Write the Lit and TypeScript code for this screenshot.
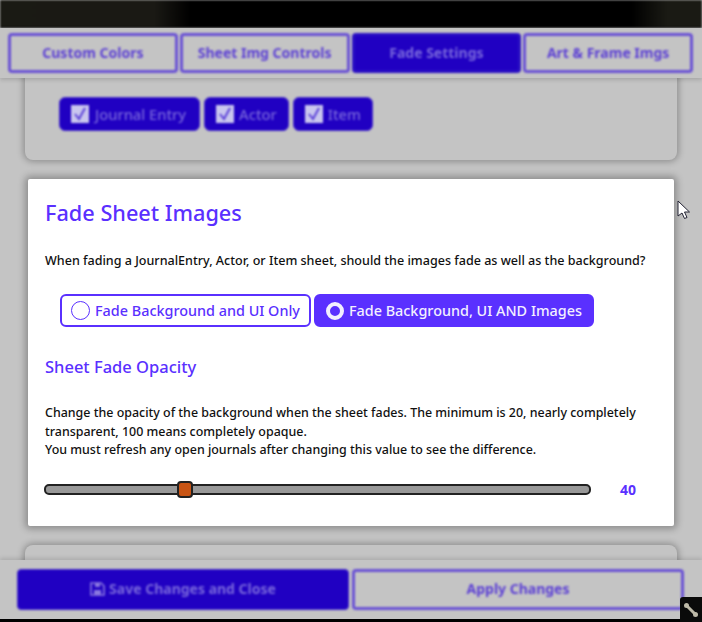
import { LitElement, html, css, svg } from "lit";
import { customElement } from "lit/decorators.js";

const check = svg`<svg class="ck" viewBox="0 0 18 18" width="18" height="18"><rect x="0" y="0" width="18" height="18" fill="#c9c6ee"/><path d="M4 9l4 5 6-11" fill="none" stroke="#5a40d8" stroke-width="2"/></svg>`;

@customElement("app-root")
export class AppRoot extends LitElement {
  static styles = css`
    :host { display: block; width: 702px; height: 622px; overflow: hidden; position: relative; background: #c4c4c4; font-family: "Noto Sans", sans-serif; }
    * { box-sizing: border-box; }
    .shell { display: flex; flex-direction: column; height: 622px; }
    .top { height: 28px; flex: none; background: linear-gradient(90deg, #1a1a14 0, #1a1914 22%, #000 27%, #000 90%, #1a1a14 95%); border-bottom: 1px solid #000; filter: blur(1px); }
    .tabs { flex: none; height: 50px; display: flex; padding: 5px 9px 0 8px; gap: 2px; background: #c4c4c4; box-shadow: 0 2px 4px rgba(0,0,0,.15); z-index: 2; position: relative; }
    .tab { width: 170px; height: 40px; border: 3px solid #6a52d4; border-radius: 4px; color: #5c40d4; display: flex; align-items: center; justify-content: center; padding-bottom: 2px; font-weight: 700; font-size: 14px; filter: blur(.9px); }
    .tab.on { background: #2000c2; border-color: #2a10c4; color: #7a68dc; }
    .main { flex: 1; min-height: 0; overflow: hidden; padding: 0 25px; }
    .card { border-radius: 8px; background: #c4c4c4; box-shadow: 0 0 6px 2px rgba(0,0,0,.26); }
    .first { height: 102px; margin-top: -20px; padding: 39px 34px 0; display: flex; flex-direction: column; }
    .checks { display: flex; gap: 4px; }
    .chk { height: 34px; padding: 0 11px; background: #2000c2; border: 1px solid #4a30cc; border-radius: 6px; display: flex; align-items: center; gap: 5px; color: #7a68dc; font-size: 14.7px; font-weight: 500; filter: blur(.9px); }
    .chk:first-child { padding: 0 13px 0 11px; gap: 6px; }
    .ck { flex: none; }
    .fade { margin: 19px 3px 0; height: 347px; background: #fff; border-radius: 2px; padding: 19px 17px 0; box-shadow: 0 0 7px 3px rgba(0,0,0,.28); }
    h2 { margin: 0; color: #5a30ff; font-size: 21.7px; line-height: 30px; font-weight: 500; }
    .q { margin: 24px 0 0; color: #111; font-size: 12.55px; line-height: 18px; font-weight: 500; white-space: nowrap; }
    .radios { display: flex; gap: 3px; margin: 24px 0 0 15px; }
    .radio { height: 33px; border: 2px solid #5a30ff; border-radius: 6px; display: flex; align-items: center; gap: 5px; padding: 0 9px 0 9px; color: #5a30ff; font-size: 14.4px; font-weight: 500; line-height: 27px; }
    .radio.on { background: #5a30ff; color: #f2efff; padding: 0 10px; }
    .dot { width: 19px; height: 19px; border-radius: 50%; border: 1px solid #5a30ff; background: #fff; flex: none; }
    .radio.on .dot { width: 18px; height: 18px; border: 4px solid #f2efff; background: #5a30ff; }
    h3 { margin: 28px 0 0; color: #5a30ff; font-size: 16.5px; line-height: 24px; font-weight: 500; }
    .desc { margin: 25px 0 0; color: #111; font-size: 12.44px; line-height: 18.500px; font-weight: 500; }
    .sl { display: flex; align-items: center; margin-top: 18px; height: 24px; }
    input { -webkit-appearance: none; appearance: none; width: 547px; height: 11px; margin: 0 0 0 -1px; background: #999; border: 2px solid #222; border-radius: 5px; flex: none; }
    input::-webkit-slider-thumb { -webkit-appearance: none; width: 16px; height: 17px; margin-left: -1px; background: #c85414; border: 2px solid #222; border-radius: 4px; }
    .val { margin-left: 29px; color: #5a30ff; font-weight: 700; font-size: 14px; }
    .third { height: 60px; margin-top: 19px; }
    .foot { flex: none; height: 62px; display: grid; grid-template-columns: 1fr 1fr; gap: 3px; padding: 9px 18px 4px 17px; background: #c4c4c4; position: relative; z-index: 2; box-shadow: 0 -2px 4px rgba(0,0,0,.12); border-bottom: 3px solid #000; }
    .btn { height: 41px; border-radius: 4px; display: flex; align-items: center; justify-content: center; gap: 4px; padding-bottom: 2px; font-size: 14px; font-weight: 700; filter: blur(.9px); }
    .save { background: #2000c2; color: #7a68dc; border: 1px solid #4a30cc; }
    .apply { border: 3px solid #6a52d4; color: #5c40d4; }
    .cursor { position: absolute; left: 677px; top: 200px; }
    .handle { position: absolute; left: 680px; top: 597px; width: 22px; height: 25px; background: #0a0a0a; border-radius: 3px 0 0 0; display: flex; align-items: center; justify-content: center; z-index: 3; }
    .handle svg { filter: blur(.5px); }
  `;
  render() {
    return html`<div class="shell">
      <div class="top"></div>
      <div class="tabs">
        <div class="tab">Custom Colors</div>
        <div class="tab">Sheet Img Controls</div>
        <div class="tab on">Fade Settings</div>
        <div class="tab">Art &amp; Frame Imgs</div>
      </div>
      <div class="main">
        <div class="card first">
          <div class="checks">
            <div class="chk">${check}Journal Entry</div>
            <div class="chk">${check}Actor</div>
            <div class="chk">${check}Item</div>
          </div>
        </div>
        <div class="fade">
          <h2>Fade Sheet Images</h2>
          <p class="q">When fading a JournalEntry, Actor, or Item sheet, should the images fade as well as the background?</p>
          <div class="radios">
            <div class="radio"><span class="dot"></span>Fade Background and UI Only</div>
            <div class="radio on"><span class="dot"></span>Fade Background, UI AND Images</div>
          </div>
          <h3>Sheet Fade Opacity</h3>
          <p class="desc">Change the opacity of the background when the sheet fades. The minimum is 20, nearly completely transparent, 100 means completely opaque.<br>You must refresh any open journals after changing this value to see the difference.</p>
          <div class="sl"><input type="range" min="20" max="100" .value=${"40"}><span class="val">40</span></div>
        </div>
        <div class="card third"></div>
      </div>
      <div class="foot">
        <div class="btn save"><svg width="15" height="15" viewBox="0 0 15 15"><path d="M1 2h10l3 3v9H1z" fill="none" stroke="#8a78e0" stroke-width="1.6"/><rect x="5" y="2" width="5" height="4" fill="#8a78e0"/><rect x="4" y="9" width="7" height="5" fill="#8a78e0"/></svg>Save Changes and Close</div>
        <div class="btn apply">Apply Changes</div>
      </div>
    </div>
    <svg class="cursor" width="14" height="20" viewBox="0 0 14 20"><path d="M1 1v15l4-3 2.500 5.500 2.500-1L7.500 12H12.500z" fill="#fff" stroke="#223" stroke-width="1"/></svg>
    <div class="handle"><svg width="16" height="16" viewBox="0 0 16 16"><path d="M4 4l8 8" stroke="#bdb9a8" stroke-width="3"/><circle cx="3.500" cy="3.500" r="2.500" fill="#bdb9a8"/><circle cx="12.500" cy="12.500" r="2.500" fill="#bdb9a8"/></svg></div>`;
  }
}
